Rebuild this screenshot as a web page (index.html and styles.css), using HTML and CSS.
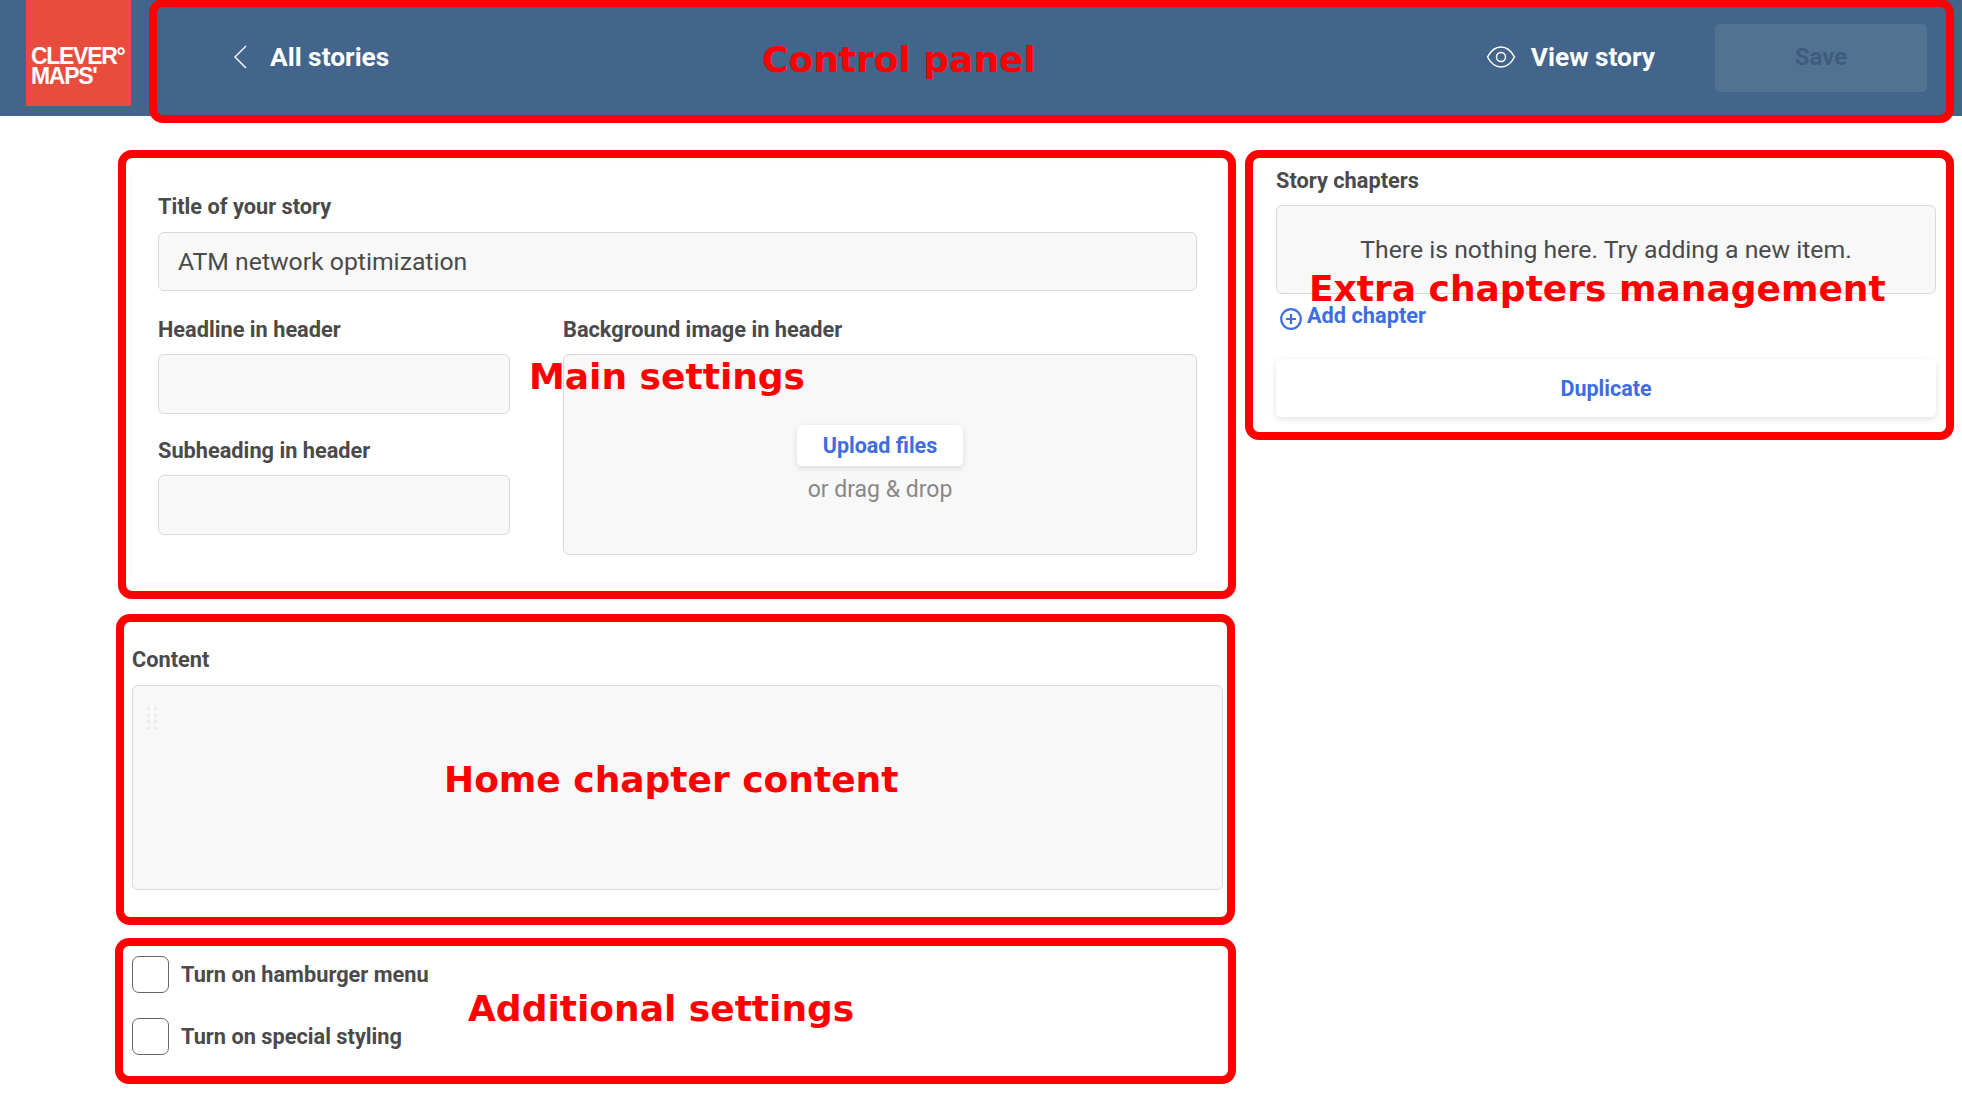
FILE: index.html
```html
<!DOCTYPE html>
<html lang="en">
<head>
<meta charset="utf-8">
<title>Story editor</title>
<link rel="stylesheet" href="styles.css">
</head>
<body>
<header class="topbar">
  <div class="logo"><span>CLEVER°</span><span>MAPS'</span></div>
  <a class="back">
    <svg class="back-icon" viewBox="0 0 14 24" width="14" height="24"><path d="M13 1 2 12l11 11" fill="none" stroke="#fff" stroke-width="1.4"/></svg>
    All stories
  </a>
  <a class="view">
    <svg class="eye-icon" viewBox="0 0 30 24" width="30" height="24"><path d="M1.500 12C5 5.500 9.500 2 15 2S25 5.500 28.500 12C25 18.500 20.500 22 15 22S5 18.500 1.500 12Z" fill="none" stroke="#fff" stroke-width="1.500"/><circle cx="15" cy="12" r="4.500" fill="none" stroke="#fff" stroke-width="1.500"/></svg>
    View story
  </a>
  <button class="save">Save</button>
</header>

<main class="page">
  <div class="left">
    <section class="card">
      <label class="label">Title of your story</label>
      <div class="field title-field">ATM network optimization</div>
      <div class="two-col">
        <div class="col-inputs">
          <label class="label">Headline in header</label>
          <div class="field"></div>
          <label class="label sub-label">Subheading in header</label>
          <div class="field"></div>
        </div>
        <div class="col-drop">
          <label class="label">Background image in header</label>
          <div class="drop">
            <button class="btn upload">Upload files</button>
            <span class="drop-hint">or drag &amp; drop</span>
          </div>
        </div>
      </div>
    </section>

    <section class="content">
      <label class="label">Content</label>
      <div class="content-box">
        <div class="dots"><i></i><i></i><i></i><i></i><i></i><i></i><i></i><i></i></div>
      </div>
    </section>

    <section class="checks">
      <div class="check"><span class="box"></span><span class="check-text">Turn on hamburger menu</span></div>
      <div class="check"><span class="box"></span><span class="check-text">Turn on special styling</span></div>
    </section>
  </div>

  <aside class="right">
    <label class="label">Story chapters</label>
    <div class="empty">There is nothing here. Try adding a new item.</div>
    <a class="add">
      <svg class="add-icon" viewBox="0 0 22 22" width="22" height="22"><circle cx="11" cy="11" r="9.800" fill="none" stroke="#3d6de0" stroke-width="2.200"/><path d="M11 6v10M6 11h10" stroke="#3d6de0" stroke-width="2.200"/></svg>
      <span>Add chapter</span>
    </a>
    <button class="btn duplicate">Duplicate</button>
  </aside>
</main>

<div class="note note-control"></div>
<div class="note note-main"></div>
<div class="note note-chapters"></div>
<div class="note note-content"></div>
<div class="note note-extra"></div>
<div class="tag tag-control">Control panel</div>
<div class="tag tag-main">Main settings</div>
<div class="tag tag-chapters">Extra chapters management</div>
<div class="tag tag-content">Home chapter content</div>
<div class="tag tag-extra">Additional settings</div>
</body>
</html>
```
FILE: styles.css
```css
* { box-sizing: border-box; }
html, body { margin: 0; height: 1099px; overflow: hidden; background: #fff; }
body { position: relative; font-family: Roboto, "Liberation Sans", sans-serif; color: #4a4a4a; }

.topbar { height: 116px; background: #43658b; display: flex; align-items: flex-start; color: #fff; font-size: 26.300px; font-weight: 700; }
.logo { width: 105px; height: 106px; margin-left: 26px; background: #e84c3d; padding: 46px 0 0 5px; display: flex; flex-direction: column; font-family: "Liberation Sans", sans-serif; font-size: 23px; line-height: 20px; letter-spacing: -1.300px; font-weight: 700; }
.back { display: flex; align-items: center; height: 32px; margin: 41px 0 0 102px; }
.back-icon { margin: 0 23px 0 0; }
.view { display: flex; align-items: center; height: 32px; margin: 41px 0 0 auto; }
.eye-icon { margin-right: 15px; }
.save { width: 212px; height: 68px; margin: 24px 35px 0 60px; padding: 0 0 2px; border: 0; border-radius: 5px; background: #527291; color: #3f5c7e; font: 700 24px Roboto, sans-serif; }

.page { display: grid; grid-template-columns: 1091px 660px; column-gap: 53px; padding: 52px 26px 0 132px; align-items: start; }
.label { display: block; font-size: 21.750px; font-weight: 700; line-height: 26px; margin-bottom: -2px; color: #4a4a4a; }

.card { padding: 26px 26px 27px; border-radius: 12px; box-shadow: 0 2px 6px rgba(0,0,0,.04); }
.field { height: 60px; margin-top: 13px; background: #f8f8f8; border: 1px solid #d9d9d9; border-radius: 6px; }
.title-field { height: 59px; margin: 14px 0 26px; padding: 0 19px; display: flex; align-items: center; font-size: 24.750px; color: #4a4a4a; }
.two-col { display: grid; grid-template-columns: 352px 634px; column-gap: 53px; }
.sub-label { margin-top: 24px; }
.drop { height: 201px; margin-top: 13px; background: #f8f8f8; border: 1px solid #d9d9d9; border-radius: 6px; display: flex; flex-direction: column; align-items: center; padding-top: 70px; }
.btn { border: 0; background: #fff; border-radius: 5px; color: #3d6de0; font: 700 21.500px Roboto, sans-serif; box-shadow: 0 2px 6px rgba(0,0,0,.12); }
.upload { width: 166px; height: 41px; }
.drop-hint { margin-top: 10px; font-size: 23px; line-height: 28px; color: #888; }

.content { margin-top: 65px; }
.content-box { position: relative; height: 205px; margin-top: 14px; background: #f8f8f8; border: 1px solid #d9d9d9; border-radius: 6px; padding: 21px 0 0 14px; }
.dots { display: grid; grid-template-columns: 3px 3px; grid-auto-rows: 3px; column-gap: 4px; row-gap: 3.500px; }
.dots i { background: #e6e6e6; border-radius: 50%; }

.checks { margin-top: 66px; display: flex; flex-direction: column; gap: 25px; }
.check { display: flex; align-items: center; gap: 12px; }
.box { width: 37px; height: 37px; border: 1px solid #666; border-radius: 7px; background: #fff; }
.check-text { font-size: 21.750px; font-weight: 700; }

.right { margin-top: -1px; padding-top: 1px; }
.empty { height: 89px; margin-top: 13px; background: #f8f8f8; border: 1px solid #d9d9d9; border-radius: 6px; display: flex; align-items: center; justify-content: center; font-size: 24.750px; }
.add { display: flex; align-items: flex-start; gap: 5px; margin: 9px 0 0 4px; color: #3d6de0; font-size: 21.750px; font-weight: 700; line-height: 26px; height: 31px; }
.add-icon { margin-top: 5px; }
.duplicate { display: block; width: 660px; height: 58px; margin-top: 25px; }

.note { position: absolute; border: 8.500px solid #f00; border-radius: 14px; pointer-events: none; }
.note-control { left: 149px; top: -1px; width: 1805px; height: 124px; }
.note-main { left: 118px; top: 150px; width: 1118px; height: 449px; }
.note-chapters { left: 1245px; top: 150px; width: 709px; height: 290px; }
.note-content { left: 116px; top: 614px; width: 1119px; height: 311px; }
.note-extra { left: 115px; top: 938px; width: 1121px; height: 146px; }

.tag { position: absolute; font-family: "DejaVu Sans", sans-serif; font-weight: 700; font-size: 36px; line-height: 44px; color: #f00; white-space: nowrap; }
.tag-control { left: 762px; top: 38px; }
.tag-main { left: 529px; top: 355px; }
.tag-chapters { left: 1309px; top: 267px; }
.tag-content { left: 444px; top: 758px; }
.tag-extra { left: 468px; top: 987px; }
```
